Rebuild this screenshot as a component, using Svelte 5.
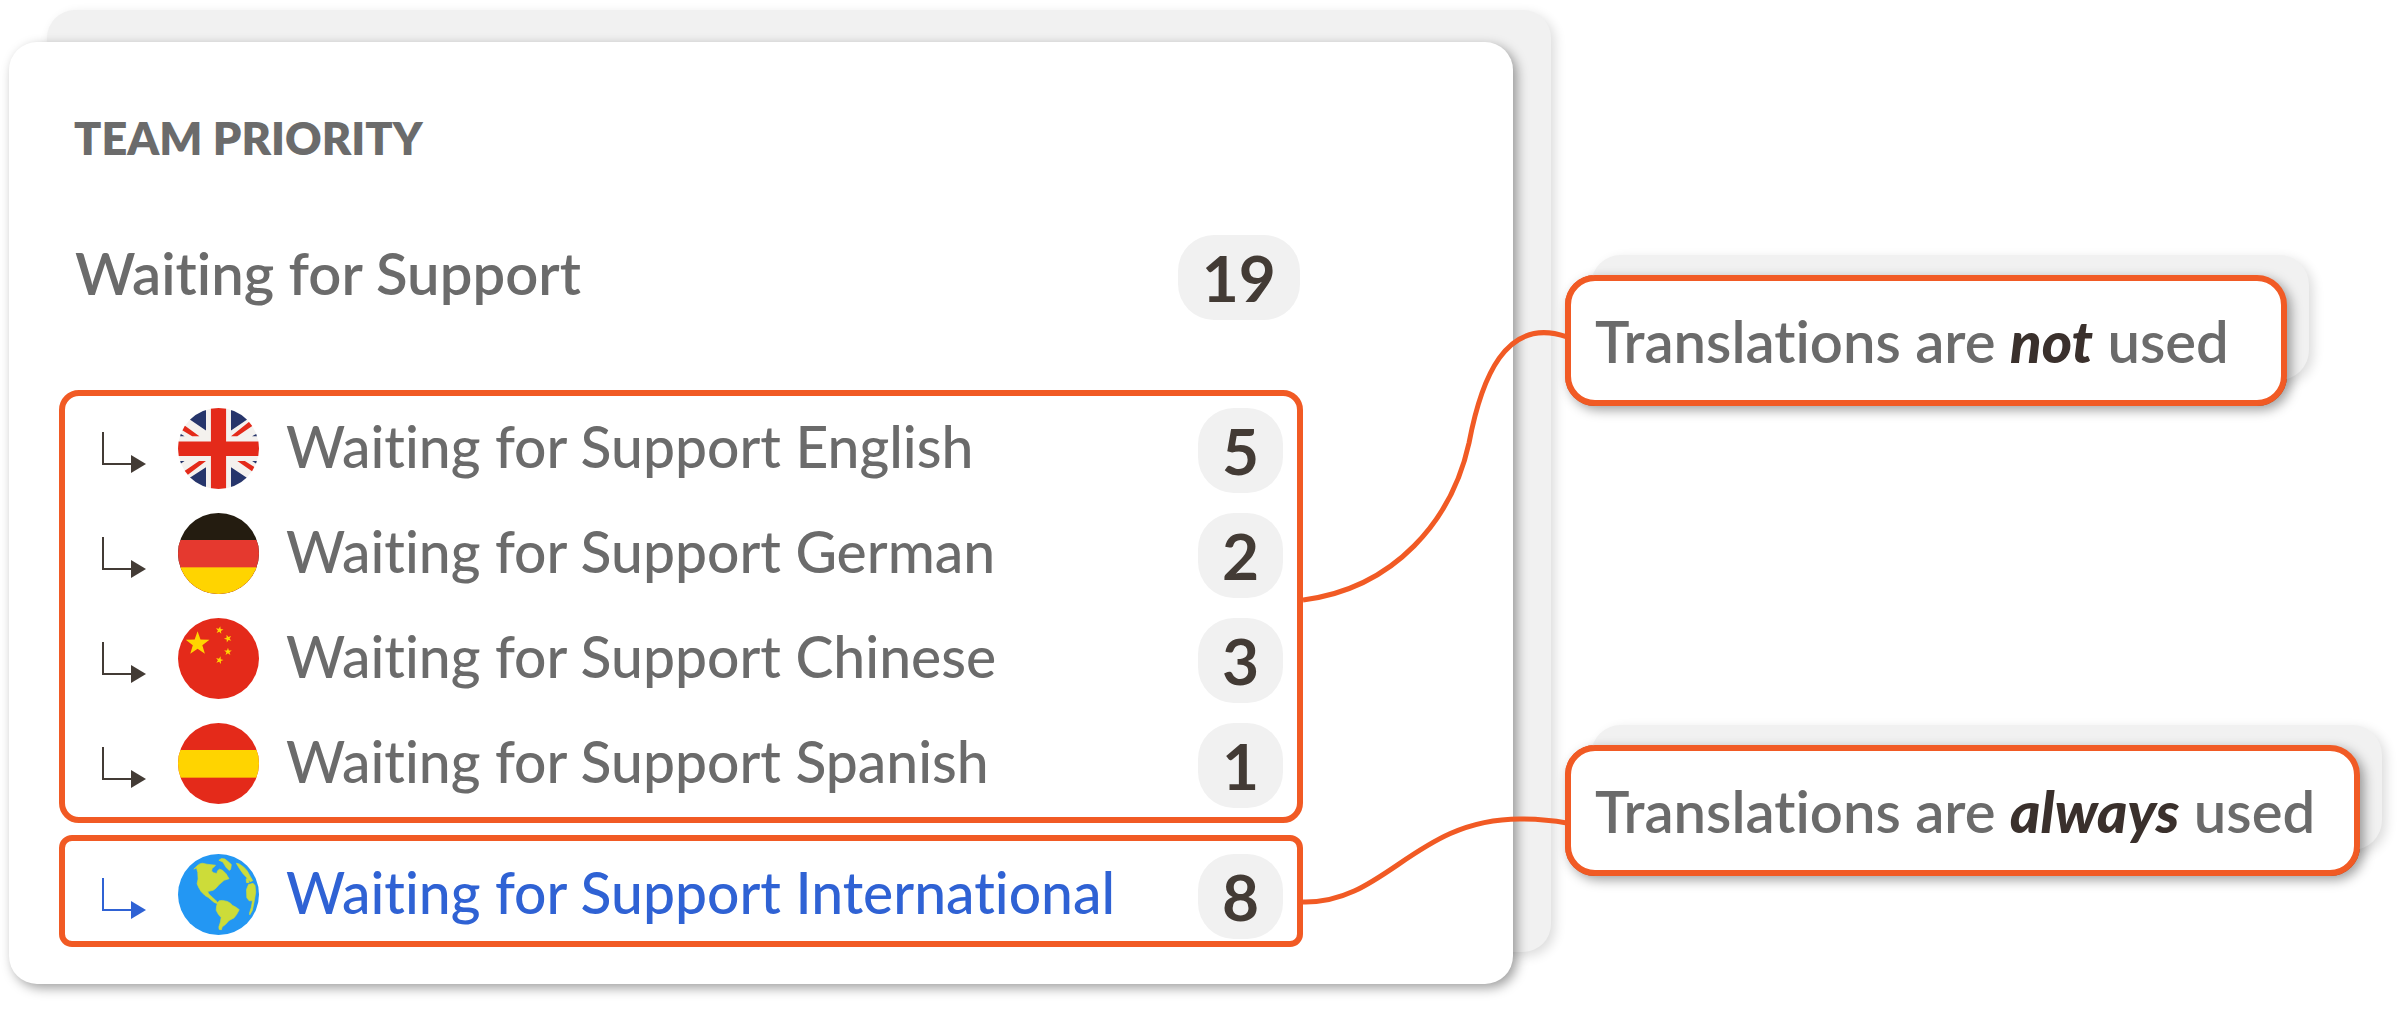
<script>
  const queues = [
    { flag: 'uk', label: 'Waiting for Support English', count: 5 },
    { flag: 'germany', label: 'Waiting for Support German', count: 2 },
    { flag: 'china', label: 'Waiting for Support Chinese', count: 3 },
    { flag: 'spain', label: 'Waiting for Support Spanish', count: 1 }
  ];
  const international = [
    { flag: 'globe', label: 'Waiting for Support International', count: 8 }
  ];

  function star(cx, cy, r, turn) {
    return Array.from({ length: 10 }, (_, i) => {
      const radius = i % 2 ? r * 0.4 : r;
      const a = ((turn - 90 + i * 36) * Math.PI) / 180;
      return `${(cx + radius * Math.cos(a)).toFixed(1)},${(cy + radius * Math.sin(a)).toFixed(1)}`;
    }).join(' ');
  }
  const stars = [
    star(58, 76, 37, 0),
    star(123, 36, 12, 10),
    star(148, 61, 12, -20),
    star(148, 100, 12, 0),
    star(123, 125, 12, 15)
  ];
</script>

{#snippet icon(name)}
  {#if name === 'uk'}
    <svg class="flag" viewBox="384 82 246 246" aria-hidden="true">
      <rect x="384" y="82" width="246" height="246" fill="#f4f1ee" />
      <path fill="#26356b" d="M421 118 469 150V70H400ZM593 118 545 150V70H610ZM421 293 469 262V340H400ZM592 293 545 262V340H610ZM384 156 404 168H384ZM630 156 609 168H630ZM384 243H404L384 257ZM630 243H609L630 257Z" />
      <path fill="#e42a1a" d="M402 134 449 168H427L388 144ZM545 168 602 122 614 134 564 168ZM469 243 410 288 398 277 448 243ZM564 243H587L624 266 612 276Z" />
      <path fill="#e42a1a" d="M484 82H530V184H630V228H530V328H484V228H384V184H484Z" />
    </svg>
  {:else if name === 'germany'}
    <svg class="flag" viewBox="0 0 240 240" aria-hidden="true">
      <rect width="240" height="240" fill="#241c10" />
      <rect y="80" width="240" height="160" fill="#e5392f" />
      <rect y="161" width="240" height="79" fill="#ffd400" />
    </svg>
  {:else if name === 'china'}
    <svg class="flag" viewBox="0 0 240 240" aria-hidden="true">
      <rect width="240" height="240" fill="#e42a1a" />
      {#each stars as points}
        <polygon {points} fill="#ffd400" />
      {/each}
    </svg>
  {:else if name === 'spain'}
    <svg class="flag" viewBox="0 0 246 246" aria-hidden="true">
      <rect width="246" height="246" fill="#e42a1a" />
      <rect y="82" width="246" height="84" fill="#ffd400" />
    </svg>
  {:else}
    <svg class="flag" viewBox="380 484 246 246" aria-hidden="true">
      <rect x="380" y="484" width="246" height="246" fill="#2397f3" />
      <g fill="#cddc39" stroke="#cddc39" stroke-width="2" stroke-linejoin="round">
        <path d="M428 530 438 520 446 514 454 512 468 515 494 518 490 523 484 527 482 536 488 541 498 543 500 535 506 530 515 533 526 544 535 559 520 564 505 577 495 588 487 594 470 598 474 606 485 616 498 628 502 636 490 631 472 616 462 610 450 598 442 584 438 574 441 560 440 540 436 526Z" />
        <path d="M500 633 505 626 515 625 530 628 540 634 545 640 555 645 566 653 558 668 550 678 535 686 525 697 514 706 512 714 505 713 504 706 509 690 511 677 503 668 496 655 497 643Z" />
        <path d="M504 503 512 498 522 499 532 507 542 516 540 530 536 534 527 526 516 508Z" />
        <path d="M557 512 566 514 580 524 590 535 600 553 607 565 599 568 590 557 577 543 566 527ZM587 559 593 560 596 571 588 571Z" />
        <path d="M594 577 608 573 614 580 616 600 612 625 606 655 598 669 597 664 603 645 606 626 596 626 589 617 588 592Z" />
      </g>
    </svg>
  {/if}
{/snippet}

{#snippet rows(items)}
  <ul class="rows">
    {#each items as item}
      <li class="row">
        <svg class="arrow" viewBox="0 0 44 42" aria-hidden="true">
          <path d="M1 0V32H31" fill="none" stroke="currentColor" stroke-width="2" />
          <path d="M29 23 44 32 29 41Z" fill="currentColor" />
        </svg>
        {@render icon(item.flag)}
        <span class="label">{item.label}</span>
        <span class="badge">{item.count}</span>
      </li>
    {/each}
  </ul>
{/snippet}

<main class="stage">
  <section class="card">
    <h1>TEAM PRIORITY</h1>
    <div class="summary">
      <h2>Waiting for Support</h2>
      <span class="badge">19</span>
    </div>
    <div class="group">{@render rows(queues)}</div>
    <div class="group group-active">{@render rows(international)}</div>
  </section>

  <aside class="callouts">
    <div class="callout callout-not">
      <svg class="link link-up" viewBox="0 0 264 280" aria-hidden="true">
        <path d="M0 270C92 258 149 190 166 113C178 50 202 -15 264 7" />
      </svg>
      <p>Translations are <em>not</em> used</p>
    </div>
    <div class="callout callout-always">
      <svg class="link link-down" viewBox="0 0 264 100" aria-hidden="true">
        <path d="M0 92C82 94 112 9 217 9Q242 9 264 13" />
      </svg>
      <p>Translations are <em>always</em> used</p>
    </div>
  </aside>
</main>

<style>
  :global(body) {
    margin: 0;
    background: #fff;
  }

  .stage {
    --orange: #f15a24;
    --grey: #f1f1f1;
    --text: #6b6b6b;
    --dark: #433b35;
    display: grid;
    grid-template-columns: minmax(0, 1fr) 795px;
    column-gap: 52px;
    align-items: start;
    padding: 42px 40px 50px 9px;
    box-sizing: border-box;
    font-family: Lato, 'Open Sans', sans-serif;
    font-size: 58px;
    font-variant-ligatures: none;
    color: var(--text);
  }

  .card,
  .callout {
    position: relative;
    z-index: 0;
  }

  .card {
    padding: 66px 210px 37px 50px;
    border-radius: 28px;
  }

  /* Grey sheet peeking out behind each panel */
  .card::before,
  .callout::before {
    content: '';
    position: absolute;
    z-index: -2;
    background: var(--grey);
    box-shadow: 4px 4px 12px rgba(0, 0, 0, 0.14);
  }

  .card::after,
  .callout::after {
    content: '';
    position: absolute;
    inset: 0;
    z-index: -1;
    background: #fff;
    border-radius: inherit;
    box-shadow: 4px 4px 12px rgba(0, 0, 0, 0.38);
  }

  .card::before {
    inset: -32px -38px 32px 38px;
    border-radius: 28px;
  }

  h1,
  h2,
  p,
  ul {
    margin: 0;
    padding: 0;
  }

  h1 {
    padding-left: 15px;
    font-size: 45px;
    line-height: 60px;
    font-weight: 800;
  }

  .summary {
    display: flex;
    align-items: flex-start;
    justify-content: space-between;
    padding: 0 3px 0 16px;
    margin: 67px 0 70px;
  }

  h2 {
    font-size: 58px;
    line-height: 76px;
    font-weight: 600;
  }

  .group {
    padding: 12px 14px 9px 37px;
    border: 6px solid var(--orange);
    border-radius: 20px;
  }

  .group-active {
    margin-top: 12px;
    padding-top: 13px;
    padding-bottom: 2px;
    border-radius: 13px;
    color: #2f62d4;
  }

  .rows {
    display: flex;
    flex-direction: column;
    gap: 20px;
    list-style: none;
  }

  .row {
    display: flex;
    align-items: flex-start;
  }

  .arrow {
    flex: none;
    width: 44px;
    height: 42px;
    margin: 24px 32px 0 0;
    color: var(--dark);
  }

  .group-active .arrow {
    color: inherit;
  }

  .flag {
    flex: none;
    width: 81px;
    height: 81px;
    margin-right: 27px;
    border-radius: 50%;
  }

  .label {
    flex: 1;
    font-size: 57px;
    line-height: 76px;
    font-weight: 500;
    white-space: nowrap;
  }

  .badge {
    flex: none;
    box-sizing: border-box;
    min-width: 85px;
    padding: 0 24px;
    border-radius: 36px;
    background: var(--grey);
    color: var(--dark);
    font-size: 64px;
    line-height: 85px;
    font-weight: 700;
    text-align: center;
  }

  .callouts {
    display: flex;
    flex-direction: column;
    align-items: flex-start;
    gap: 339px;
    padding-top: 233px;
  }

  .callout {
    box-sizing: border-box;
    padding: 24px;
    border: 6px solid var(--orange);
    border-radius: 30px;
    white-space: nowrap;
  }

  .callout::before {
    inset: -26px -28px 20px 20px;
    border-radius: 30px;
  }

  .callout::after {
    inset: -6px;
    border: 6px solid var(--orange);
  }

  .callout-not {
    width: 722px;
  }

  .callout-always {
    width: 100%;
  }

  .callout p {
    font-weight: 600;
    line-height: 71px;
  }

  .callout em {
    color: #3a302c;
    font-weight: 900;
  }

  .link {
    position: absolute;
    right: calc(100% + 4px);
    width: 264px;
    fill: none;
    stroke: var(--orange);
    stroke-width: 5;
  }

  .link-up {
    top: 49px;
    height: 280px;
  }

  .link-down {
    top: 59px;
    height: 100px;
  }
</style>
